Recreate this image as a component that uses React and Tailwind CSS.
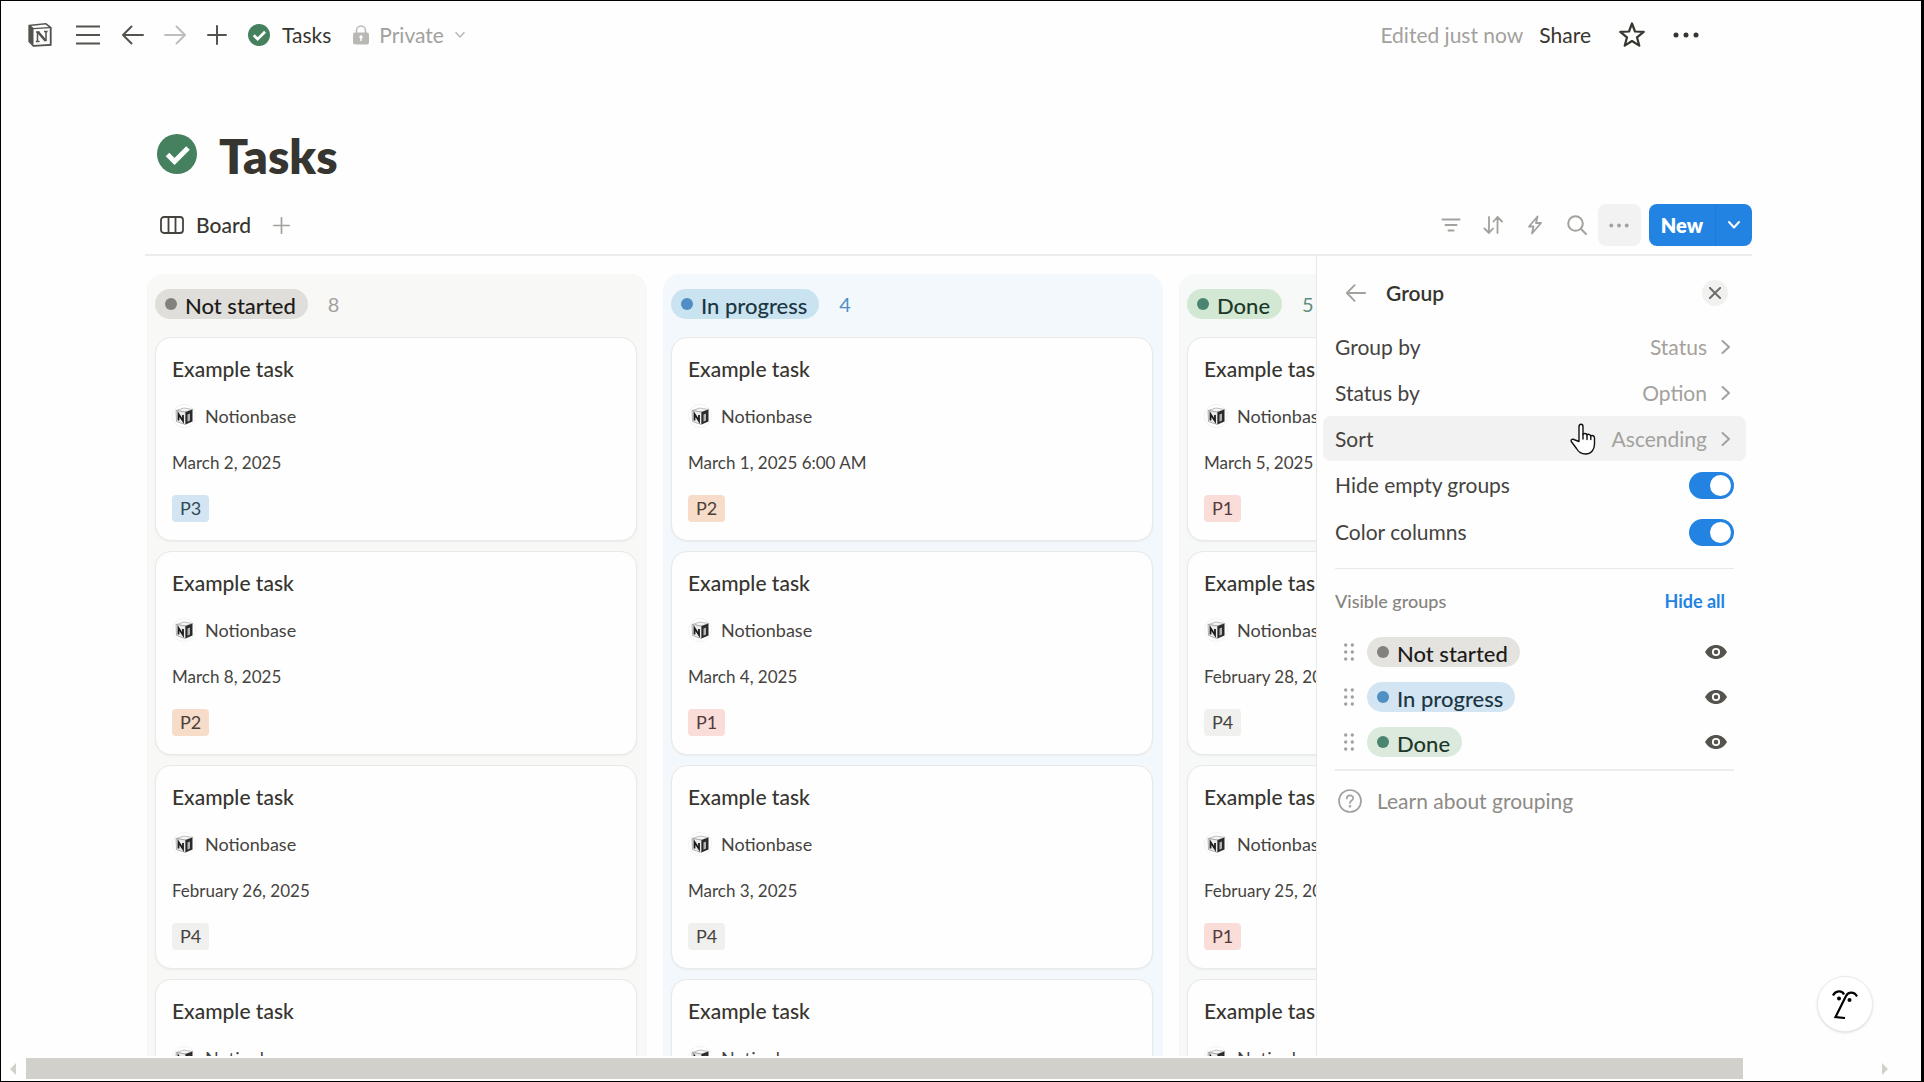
const ink = "stroke-[#55534e]";

const GROUPS = {
  notStarted: {
    name: "Not started", count: 8, dot: "bg-[#83817c]", pill: "bg-[#dfdeda]", listPill: "bg-[#e4e3e0]",
    column: "bg-[#f8f8f7]", tone: "text-[#a3a19d]", ink: "text-[#1c1b19]",
  },
  inProgress: {
    name: "In progress", count: 4, dot: "bg-[#508fc3]", pill: "bg-[#cae3f0]", listPill: "bg-[#d3e5f2]",
    column: "bg-[#f3f8fd]", tone: "text-[#508fc3]", ink: "text-[#1b3642]",
  },
  done: {
    name: "Done", count: 5, dot: "bg-[#4a8570]", pill: "bg-[#d3e8d3]", listPill: "bg-[#dbeadd]",
    column: "bg-[#f6f9f7]", tone: "text-[#5f8f7c]", ink: "text-[#1c3829]",
  },
};

const TAGS = {
  P1: "bg-[#fadcd9] text-[#523a3a]",
  P2: "bg-[#f8dcca] text-[#494038]",
  P3: "bg-[#d3e5f2] text-[#2f4a55]",
  P4: "bg-[#f0f0ef] text-[#45433e]",
};

const COLUMNS = [
  { id: "notStarted", tasks: [["March 2, 2025", "P3"], ["March 8, 2025", "P2"], ["February 26, 2025", "P4"], ["March 6, 2025", "P2"]] },
  { id: "inProgress", tasks: [["March 1, 2025 6:00 AM", "P2"], ["March 4, 2025", "P1"], ["March 3, 2025", "P4"], ["March 7, 2025", "P3"]] },
  { id: "done", tasks: [["March 5, 2025", "P1"], ["February 28, 2025", "P4"], ["February 25, 2025", "P1"], ["February 24, 2025", "P2"]] },
];

function Arrow({ className, flip }) {
  return (
    <svg viewBox="0 0 24 24" fill="none" strokeWidth="2" strokeLinecap="round" strokeLinejoin="round" className={className}>
      {flip ? <path d="M2 12h20M13.500 3.500L22 12l-8.500 8.500" /> : <path d="M22 12H2M10.500 3.500L2 12l8.500 8.500" />}
    </svg>
  );
}

function Chevron({ className }) {
  return (
    <svg viewBox="0 0 10 16" fill="none" strokeWidth="2" strokeLinecap="round" strokeLinejoin="round" className={className}>
      <path d="M1.500 2L8 8l-6.500 6" />
    </svg>
  );
}

function ChevronDown({ className }) {
  return (
    <svg viewBox="0 0 14 10" fill="none" strokeLinecap="round" strokeLinejoin="round" className={className}>
      <path d="M2 2l5 5.500L12 2" />
    </svg>
  );
}

function CheckCircle({ className }) {
  return (
    <svg viewBox="0 0 40 40" className={className}>
      <circle cx="20" cy="20" r="20" fill="#45815f" />
      <path d="M10.500 20.500l7 7L31 14" fill="none" stroke="#fff" strokeWidth="5" />
    </svg>
  );
}

function Plus({ className }) {
  return (
    <svg viewBox="0 0 20 20" fill="none" strokeLinecap="round" className={className}>
      <path d="M10 1v18M1 10h18" />
    </svg>
  );
}

function Dots({ className }) {
  return (
    <svg viewBox="0 0 26 6" fill="currentColor" className={className}>
      <circle cx="3" cy="3" r="2.500" />
      <circle cx="13" cy="3" r="2.500" />
      <circle cx="23" cy="3" r="2.500" />
    </svg>
  );
}

function CubeLogo() {
  return (
    <svg viewBox="0 0 24 24" className="size-6 shrink-0">
      <circle cx="12" cy="12" r="11.500" fill="#fff" stroke="#f1f1f0" />
      <path d="M4 6.500l8-2.500 8.500 1.500-6.500 2.500z" fill="#f4f4f4" stroke="#b0b0b0" strokeWidth="0.800" />
      <path d="M4 6.500L13.500 8v12.500L4.500 17.500z" fill="#ececec" stroke="#a0a0a0" strokeWidth="0.800" />
      <path d="M13.500 8L20.500 5.500v12l-7 3z" fill="#2a2a2a" />
      <path d="M15.500 10.500l2.500-1v7l-2.500 1.200z" fill="#b4b4b4" />
      <path d="M6.500 16.500V10l4.500 7V11" fill="none" stroke="#1c1c1c" strokeWidth="1.800" />
    </svg>
  );
}

function Header() {
  return (
    <header className="flex items-center justify-between pt-3 pr-[222px] pl-[27px] text-[#37352f]">
      <nav className="flex h-[43px] items-center" aria-label="Page">
        <button aria-label="Home">
          <svg viewBox="0 0 24 24" className="size-6" fill="none" stroke="#55534e" strokeWidth="1.300" strokeLinejoin="round">
            <path d="M1 2.500L18 .7l5 3.800v17.700l-17.500 1L1 18.500z" fill="#55534e" />
            <path d="M3.200 2.900L17.500 1.500l3.200 2.400-15 1.100z" fill="#fefefe" stroke="none" />
            <path d="M5.500 6.200l16.300-1v15.700l-16.300 1z" fill="#fefefe" stroke="none" />
            <path d="M8 9h3.500M9.500 9.200v9M7.800 18.500h3.800M16 8.500h3.600M18 8.500v9.500" strokeWidth="1.500" />
            <path d="M10 9l7.800 9" strokeWidth="2.600" />
          </svg>
        </button>
        <button aria-label="Menu" className="ml-6">
          <svg viewBox="0 0 24 22" className="h-[22px] w-6 stroke-[#55534e]" strokeWidth="2"><path d="M0 2.500h24M0 11h24M0 19.500h24" /></svg>
        </button>
        <button aria-label="Back" className="ml-[21px]"><Arrow className="size-6 stroke-[#55534e]" /></button>
        <button aria-label="Forward" className="ml-[18px]"><Arrow flip className="size-6 stroke-[#bfbebb]" /></button>
        <button aria-label="New page" className="ml-5"><Plus className={"size-5 stroke-2 " + ink} /></button>
        <CheckCircle className="ml-[21px] size-[22px]" />
        <a href="#tasks" className="ml-3 text-[21px]">Tasks</a>
        <button className="ml-[22px] flex items-center text-[21px] text-[#a3a19d]">
          <svg viewBox="0 0 16 20" className="mr-[10px] h-5 w-4">
            <path d="M3.500 9V5.500a4.500 4.500 0 019 0V9" fill="none" stroke="#b9b8b5" strokeWidth="1.500" />
            <rect y="7.500" width="16" height="12" rx="2" fill="#b9b8b5" />
            <circle cx="8" cy="12" r="1.700" fill="#fefefe" />
            <path d="M8 12v4" stroke="#fefefe" strokeWidth="1.500" />
          </svg>
          Private
          <ChevronDown className="ml-[10px] h-2 w-3 stroke-[#bfbebb] stroke-2" />
        </button>
      </nav>
      <div className="flex h-[43px] items-center text-[21px]">
        <span className="text-[#a3a19d]">Edited just now</span>
        <button className="ml-4">Share</button>
        <button aria-label="Favorite" className="ml-7">
          <svg viewBox="0 0 26 26" className="size-[26px]" fill="none" stroke="#37352f" strokeWidth="2.200" strokeLinejoin="round">
            <path d="M13 1.500l3 8 8.700.4-6.700 5.400 2.300 8.400L13 19l-7.300 4.700L8 15.300 1.300 9.900l8.700-.4z" />
          </svg>
        </button>
        <button aria-label="More" className="ml-7"><Dots className="h-[6px] w-[26px]" /></button>
      </div>
    </header>
  );
}

function Toolbar() {
  return (
    <div className="flex h-[52px] items-start justify-between border-b-2 border-[#ececeb]">
      <div className="flex h-[42px] items-center pl-[15px]">
        <button className="flex items-center text-[21px] font-medium text-[#37352f]">
          <svg viewBox="0 0 24 18" className="mr-3 h-[18px] w-6" fill="none" stroke="#45433e" strokeWidth="1.800">
            <rect x="1" y="1" width="22" height="16" rx="3" />
            <path d="M8.500 1v16M15.500 1v16" />
          </svg>
          Board
        </button>
        <button aria-label="Add view" className="ml-[22px]"><Plus className="size-[17px] stroke-[#a3a19d] stroke-2" /></button>
      </div>
      <div className="flex h-[42px] items-center text-[#a3a19d]">
        <button aria-label="Filter" className="flex h-full w-[42px] items-center justify-center">
          <svg viewBox="0 0 20 16" className="h-4 w-5 stroke-current" strokeWidth="2" strokeLinecap="round"><path d="M1.500 2.500h17M4.500 8h11M7.500 13.500h5" /></svg>
        </button>
        <button aria-label="Sort" className="flex h-full w-[42px] items-center justify-center">
          <svg viewBox="0 0 20 18" className="h-[18px] w-5 stroke-current" fill="none" strokeWidth="1.800" strokeLinecap="round" strokeLinejoin="round">
            <path d="M6 1v16M1.500 12.500L6 17l4-4.500M14.500 17V1M10.500 5.500L14.500 1 19 5.500" />
          </svg>
        </button>
        <button aria-label="Automations" className="flex h-full w-[42px] items-center justify-center">
          <svg viewBox="0 0 16 20" className="h-5 w-4 stroke-current" fill="none" strokeWidth="1.800" strokeLinejoin="round">
            <path d="M10.500 1.500L2 11.500h4.500L5 18.500l9-10.500H9z" />
          </svg>
        </button>
        <button aria-label="Search" className="flex h-full w-[42px] items-center justify-center">
          <svg viewBox="0 0 20 20" className="size-5 stroke-current" fill="none" strokeWidth="2" strokeLinecap="round"><circle cx="8.500" cy="8.500" r="7.300" /><path d="M14 14l5 5" /></svg>
        </button>
        <button aria-label="View options" className="flex h-full w-[43px] items-center justify-center rounded-lg bg-[#f2f2f2]">
          <Dots className="h-[5px] w-5" />
        </button>
        <div className="ml-2 flex h-full rounded-lg bg-[#2383e2] text-white">
          <button className="pr-3 pl-3 text-[20px] font-extrabold">New</button>
          <button aria-label="New options" className="flex items-center border-l border-[#2079d2] px-[11px]">
            <ChevronDown className="h-[10px] w-[14px] stroke-white stroke-2" />
          </button>
        </div>
      </div>
    </div>
  );
}

function StatusPill({ group, inList }) {
  return (
    <span className={`flex h-[30px] items-center gap-2 rounded-full pr-3 pl-[10px] text-[22px] font-medium whitespace-nowrap ${inList ? group.listPill : group.pill} ${group.ink}`}>
      <span className={`size-3 rounded-full ${group.dot}`} />
      <span className="pt-[2px]">{group.name}</span>
    </span>
  );
}

function Card({ date, tag }) {
  return (
    <article className="flex shrink-0 flex-col items-start gap-[17px] rounded-2xl border border-[#e9e9e7] bg-[#fefefe] px-4 pt-4 pb-[18px] whitespace-nowrap text-[#37352f] shadow-xs">
      <h3 className="text-[21px] leading-[30px] font-medium">Example task</h3>
      <p className="flex items-center gap-[9px] text-[18px] leading-[30px] text-[#45433e]"><CubeLogo />Notionbase</p>
      <p className="text-[17px] leading-[30px] text-[#45433e]">{date}</p>
      <span className={`rounded-sm px-2 text-[18px] leading-[27px] ${TAGS[tag]}`}>{tag}</span>
    </article>
  );
}

function Column({ group, tasks }) {
  return (
    <section className={`flex w-[500px] shrink-0 flex-col gap-[10px] rounded-t-2xl pt-[15px] pr-[10px] pl-2 ${group.column}`}>
      <header className="mb-2 flex h-[30px] items-center gap-5">
        <StatusPill group={group} />
        <span className={`text-[20px] ${group.tone}`}>{group.count}</span>
      </header>
      {tasks.map(([date, tag], i) => <Card key={i} date={date} tag={tag} />)}
    </section>
  );
}

function OptionRow({ label, value, active }) {
  return (
    <button className={`mx-[6px] mb-px flex h-[45px] items-center rounded-lg pr-[15px] pl-3 text-[21px] text-[#45433e] ${active ? "bg-[#f2f2f2]" : ""}`}>
      <span className="flex-1 text-left">{label}</span>
      {active && (
        <svg viewBox="0 0 26 32" className="mr-4 h-8 w-[26px]" fill="#fff" stroke="#111" strokeWidth="1.400" strokeLinejoin="round" strokeLinecap="round">
          <path d="M9 18.500V3.500c0-3 4-3 4 0v8c.5-1.500 3.500-1.500 4 .5.800-1.200 3.300-.8 3.800 1 1-.9 3.700-.5 3.700 2v6c0 6-3.500 10-9 10-4.500 0-7-2-9-5.500L1.300 18.500c-1-2 1.700-3 3.700-1.500z" />
          <path d="M13 11.500V16M17 12v4.500M20.800 13v3.500" fill="none" />
        </svg>
      )}
      <span className="text-[#a3a19d]">{value}</span>
      <Chevron className="ml-[14px] h-4 w-[10px] stroke-[#a3a19d]" />
    </button>
  );
}

function ToggleRow({ label }) {
  return (
    <label className="mx-[18px] mb-px flex h-[46px] items-center justify-between text-[21px] text-[#45433e]">
      {label}
      <span className="flex">
        <input type="checkbox" defaultChecked className="peer sr-only" />
        <span className="flex h-[27px] w-[45px] items-center rounded-full bg-[#c9c8c5] px-[3px] peer-checked:justify-end peer-checked:bg-[#2383e2]">
          <span className="size-[21px] rounded-full bg-white" />
        </span>
      </span>
    </label>
  );
}

function GroupPanel() {
  return (
    <aside className="flex w-[436px] shrink-0 flex-col border-l border-[#e9e9e7]">
      <div className="mt-[14px] mb-2 flex h-[46px] items-center pr-6 pl-7">
        <button aria-label="Back"><Arrow className="size-[22px] stroke-[#a3a19d]" /></button>
        <h2 className="ml-[19px] flex-1 text-[21px] font-semibold text-[#37352f]">Group</h2>
        <button aria-label="Close" className="flex size-[26px] items-center justify-center rounded-full bg-[#f1f1f0]">
          <svg viewBox="0 0 12 12" className="size-3 stroke-[#6f6d69] stroke-2"><path d="M0 0l12 12M12 0L0 12" /></svg>
        </button>
      </div>
      <div className="flex flex-col">
        <OptionRow label="Group by" value="Status" />
        <OptionRow label="Status by" value="Option" />
        <OptionRow label="Sort" value="Ascending" active />
        <ToggleRow label="Hide empty groups" />
        <ToggleRow label="Color columns" />
      </div>
      <div className="mx-[18px] mt-3 border-t border-[#e9e9e7]" />
      <div className="mt-[18px] flex h-7 items-center justify-between pr-[27px] pl-[18px] text-[18px]">
        <h3 className="font-medium text-[#85837e]">Visible groups</h3>
        <button className="font-bold text-[#2383e2]">Hide all</button>
      </div>
      <ul className="mt-[22px] mb-[12px] flex flex-col gap-[15px]">
        {Object.values(GROUPS).map((group) => (
          <li key={group.name} className="flex h-[30px] items-center pr-[25px] pl-[27px]">
            <svg viewBox="0 0 10 18" className="mr-[13px] h-[18px] w-[10px]" fill="#a3a19d">
              {[2, 9, 16].map((y) => <g key={y}><circle cx="1.700" cy={y} r="1.700" /><circle cx="8.300" cy={y} r="1.700" /></g>)}
            </svg>
            <StatusPill group={group} inList />
            <button aria-label={`Hide ${group.name}`} className="ml-auto">
              <svg viewBox="0 0 22 14" className="h-[14px] w-[22px]">
                <path d="M0 7C2.500 2.500 6.500 0 11 0s8.500 2.500 11 7c-2.500 4.500-6.500 7-11 7S2.500 11.500 0 7z" fill="#55534e" />
                <circle cx="11" cy="7" r="3.200" fill="none" stroke="#fefefe" strokeWidth="1.800" />
              </svg>
            </button>
          </li>
        ))}
      </ul>
      <div className="mx-[18px] border-t-2 border-[#ececeb]" />
      <a href="#learn" className="mt-2 flex h-11 items-center pl-[21px] text-[21px] text-[#8d8b86]">
        <svg viewBox="0 0 24 24" className="mr-[15px] size-6" fill="none" stroke="#a3a19d" strokeWidth="1.700" strokeLinecap="round">
          <circle cx="12" cy="12" r="11" />
          <path d="M8.800 9.500c0-4.200 6.400-4 6.400-.3 0 2.400-3.200 2.300-3.200 4.800" />
          <circle cx="12" cy="17.300" r="0.500" />
        </svg>
        Learn about grouping
      </a>
    </aside>
  );
}

function Scrollbar() {
  return (
    <div className="mt-[2px] mb-[2px] flex h-[21px] shrink-0 items-center pr-[33px] pl-[9px]">
      <svg viewBox="0 0 6 12" className="h-3 w-[6px]" fill="#d1d0cb"><path d="M6 0v12L0 6z" /></svg>
      <div className="mx-[10px] h-full flex-1"><div className="h-full w-[93%] bg-[#d1d0cb]" /></div>
      <svg viewBox="0 0 6 12" className="h-3 w-[6px]" fill="#d1d0cb"><path d="M0 0v12l6-6z" /></svg>
    </div>
  );
}

export default function App() {
  return (
    <div className="relative flex h-screen flex-col overflow-hidden border border-r-[3px] border-black bg-[#fefefe] font-['Lato',sans-serif]">
      <Header />
      <main className="flex min-h-0 flex-1 flex-col pr-[169px] pl-36">
        <div className="mt-[63px] mb-[15px] flex h-[70px] items-center gap-[22px] pl-3">
          <CheckCircle className="size-10" />
          <h1 className="pt-1 text-[48px] leading-[70px] font-extrabold text-[#37352f]">Tasks</h1>
        </div>
        <Toolbar />
        <div className="flex min-h-0 flex-1">
          <div className="flex min-w-0 flex-1 gap-4 overflow-hidden pt-[18px] pl-[2px]">
            {COLUMNS.map(({ id, tasks }) => <Column key={id} group={GROUPS[id]} tasks={tasks} />)}
          </div>
          <GroupPanel />
        </div>
      </main>
      <Scrollbar />
      <button aria-label="Assistant" className="absolute right-[48px] bottom-[49px] flex size-14 items-center justify-center rounded-full border border-[#ebebea] bg-white shadow-sm">
        <svg viewBox="0 0 26 30" className="h-[30px] w-[26px]" fill="none" stroke="#000" strokeWidth="2.200">
          <path d="M1 6.500C3.500 1.500 10 1 12 5.500" />
          <path d="M25 7.500C22 2 16 3 14 7L3.500 28l9.500 1" />
          <circle cx="7" cy="9.500" r="2" fill="#000" stroke="none" />
          <circle cx="17.500" cy="11" r="2" fill="#000" stroke="none" />
        </svg>
      </button>
    </div>
  );
}
